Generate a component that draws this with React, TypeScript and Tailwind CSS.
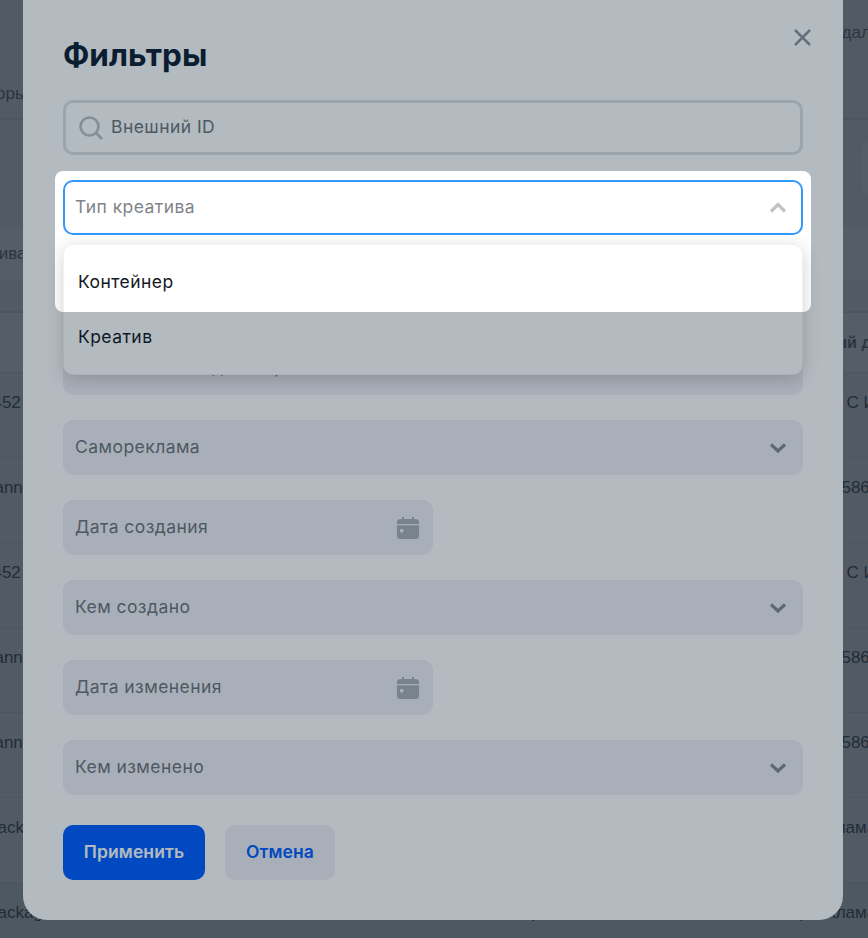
import React from "react";

const Chevron = ({ up, cls }: { up?: boolean; cls: string }) => (
  <svg width="18" height="14" viewBox="0 0 18 14" fill="none" className={cls}>
    <path d={up ? "M2 10.5 L9 3.5 L16 10.5" : "M2 3.5 L9 10 L16 3.5"} stroke="currentColor" strokeWidth="3.2" />
  </svg>
);

const Calendar = () => (
  <svg width="24" height="24" viewBox="0 0 24 24" fill="none" className="text-[#abb1b6]">
    <path d="M6 1h2v3H6zM16 1h2v3h-2z" fill="currentColor" />
    <path d="M4.5 3H19.5A3.5 3.5 0 0 1 23 6.5V8H1V6.5A3.5 3.5 0 0 1 4.5 3Z" fill="currentColor" />
    <path d="M1 9.2H23V19.5A3.5 3.5 0 0 1 19.5 23H4.5A3.5 3.5 0 0 1 1 19.5Z" fill="currentColor" />
    <rect x="4" y="13" width="3.5" height="3.5" rx="0.8" fill="#f0f0f4" />
  </svg>
);

const Field = ({ label, kind }: { label: string; kind: "select" | "date" }) => (
  <div
    className={`flex h-[55px] items-center justify-between rounded-[10px] bg-[#f0f0f4] pl-[12px] ${
      kind === "date" ? "w-[370px] pr-[13px]" : "w-full pr-[16px]"
    }`}
  >
    <span className="text-[#6f7479]">{label}</span>
    {kind === "select" ? <Chevron cls="text-[#888c90]" /> : <Calendar />}
  </div>
);

const rowText = "font-['Liberation_Sans',sans-serif] text-[17px] text-[#2e3540]";
const rowBox = "flex h-[85px] overflow-hidden border-b border-[#6c7074] pt-[17px] whitespace-nowrap";

const Row = ({ left, right }: { left: React.ReactNode; right: React.ReactNode }) => (
  <div className={`${rowBox} justify-between ${rowText}`}>
    {left}
    {right}
  </div>
);

export default function App() {
  return (
    <div className="relative h-[938px] w-[868px] overflow-hidden bg-[#74777a] font-['Inter',sans-serif] text-[17.5px] tracking-[0.45px]">
      {/* page behind the dialog */}
      <div className="flex h-[120px] items-start justify-between border-b-2 border-[#6c7074] font-['Liberation_Sans',sans-serif] tracking-normal text-[#3c4249]">
        <span className="-ml-[62px] mt-[81px] text-[17px]">Операторы</span>
        <span className="-mr-[29px] mt-[20px] text-[17px]">Удалить</span>
      </div>
      <div className="flex h-[193px] flex-col items-start border-b-2 border-[#6c7074] pt-[22px] font-['Liberation_Sans',sans-serif] tracking-normal text-[#3c4249]">
        <div className="h-[52px] w-[6px] self-end rounded-l-[10px] bg-[#797c80]" />
        <div className="mt-[33px] flex h-[54px] w-full items-center bg-[#797c80]">
          <span className="-ml-[47px] text-[17px]">Креатива</span>
        </div>
      </div>
      <div className="flex h-[60px] items-center justify-end border-b border-[#6c7074] bg-[#797c80] font-['Liberation_Sans',sans-serif] font-bold tracking-normal text-[#3c4249]">
        <span className="-mr-[20px] whitespace-nowrap text-[16px]">Рекламный дог</span>
      </div>
      <div className="tracking-normal">
        <Row left={<span className="-ml-[17px]">0452</span>} right={<span className="w-[66px]">ООО С ИВ</span>} />
        <Row left={<span className="-ml-[15px]">banner</span>} right={<span className="w-[36px]">1586</span>} />
        <Row left={<span className="-ml-[17px]">0452</span>} right={<span className="w-[66px]">ООО С ИВ</span>} />
        <Row left={<span className="-ml-[15px]">banner</span>} right={<span className="w-[36px]">1586</span>} />
        <Row left={<span className="-ml-[15px]">banner</span>} right={<span className="w-[36px]">1586</span>} />
        <Row left={<span className="-ml-[12px]">package</span>} right={<span className="w-[60px]">Реклама</span>} />
        <div className={`${rowBox} bg-[#6f7377] ${rowText}`}>
          <span className="-ml-[12px] w-[524px] flex-none">package</span>
          <span className="w-[268px] flex-none">Тир</span>
          <span className="w-[28px] flex-none">Тир</span>
          <span className="flex-none">Реклама</span>
        </div>
      </div>

      {/* dialog */}
      <div className="absolute left-[23px] top-0 flex h-[920px] w-[820px] flex-col rounded-b-[24px] bg-white px-[40px] pt-[35px]">
        <svg width="17" height="17" viewBox="0 0 17 17" fill="none" className="absolute right-[32px] top-[29px] text-[#91949a]">
          <path d="M1 1 L16 16 M16 1 L1 16" stroke="currentColor" strokeWidth="2.5" />
        </svg>
        <h1 className="h-[65px] text-[31.5px] leading-[40px] font-bold tracking-normal text-[#0f1f32]">Фильтры</h1>

        <div className="flex flex-col gap-[25px]">
          <div className="flex h-[55px] items-center rounded-[10px] border-[3px] border-[#dce1e5] pl-[13px]">
            <svg width="26" height="26" viewBox="0 0 26 26" fill="none" className="-ml-[1px] text-[#bcc1c6]">
              <circle cx="11.5" cy="11.5" r="9" stroke="currentColor" strokeWidth="2.6" />
              <path d="M18 18 L24 24" stroke="currentColor" strokeWidth="2.6" />
            </svg>
            <span className="ml-[7px] text-[#6f7479]">Внешний ID</span>
          </div>

          <div className="relative">
            <div className="flex h-[55px] items-center justify-between rounded-[10px] border-[2px] border-[#3399ff] pl-[10px] pr-[14px]">
              <span className="text-[#7f848a]">Тип креатива</span>
              <Chevron up cls="text-[#c0c2c5]" />
            </div>
            <div className="absolute left-0 top-[64px] z-10 flex w-full flex-col rounded-[10px] border border-[#f2f2f2] bg-white pb-[9px] pt-[9px] shadow-[0_4px_18px_rgba(0,0,0,0.18)]">
              <div className="flex h-[56px] items-center px-[14px] text-[#14181f]">Контейнер</div>
              <div className="flex h-[55px] items-center px-[14px] text-[#14181f]">Креатив</div>
            </div>
          </div>

          <Field label="Статус" kind="select" />
          <Field label="Назначение медиа-партии" kind="select" />
          <Field label="Самореклама" kind="select" />
          <Field label="Дата создания" kind="date" />
          <Field label="Кем создано" kind="select" />
          <Field label="Дата изменения" kind="date" />
          <Field label="Кем изменено" kind="select" />
        </div>

        <div className="mt-[30px] flex gap-[20px] font-semibold tracking-[0.1px]">
          <button className="h-[55px] w-[142px] rounded-[10px] bg-[#005eff] text-white">Применить</button>
          <button className="h-[55px] w-[110px] rounded-[10px] bg-[#f0f0f4] text-[#005eff]">Отмена</button>
        </div>
      </div>

      {/* tour highlight: everything outside this hole is dimmed */}
      <div className="pointer-events-none absolute left-[55px] top-[171px] z-20 h-[141px] w-[756px] rounded-[8px] shadow-[0_0_0_2000px_rgba(2,28,48,0.3)]" />
    </div>
  );
}
